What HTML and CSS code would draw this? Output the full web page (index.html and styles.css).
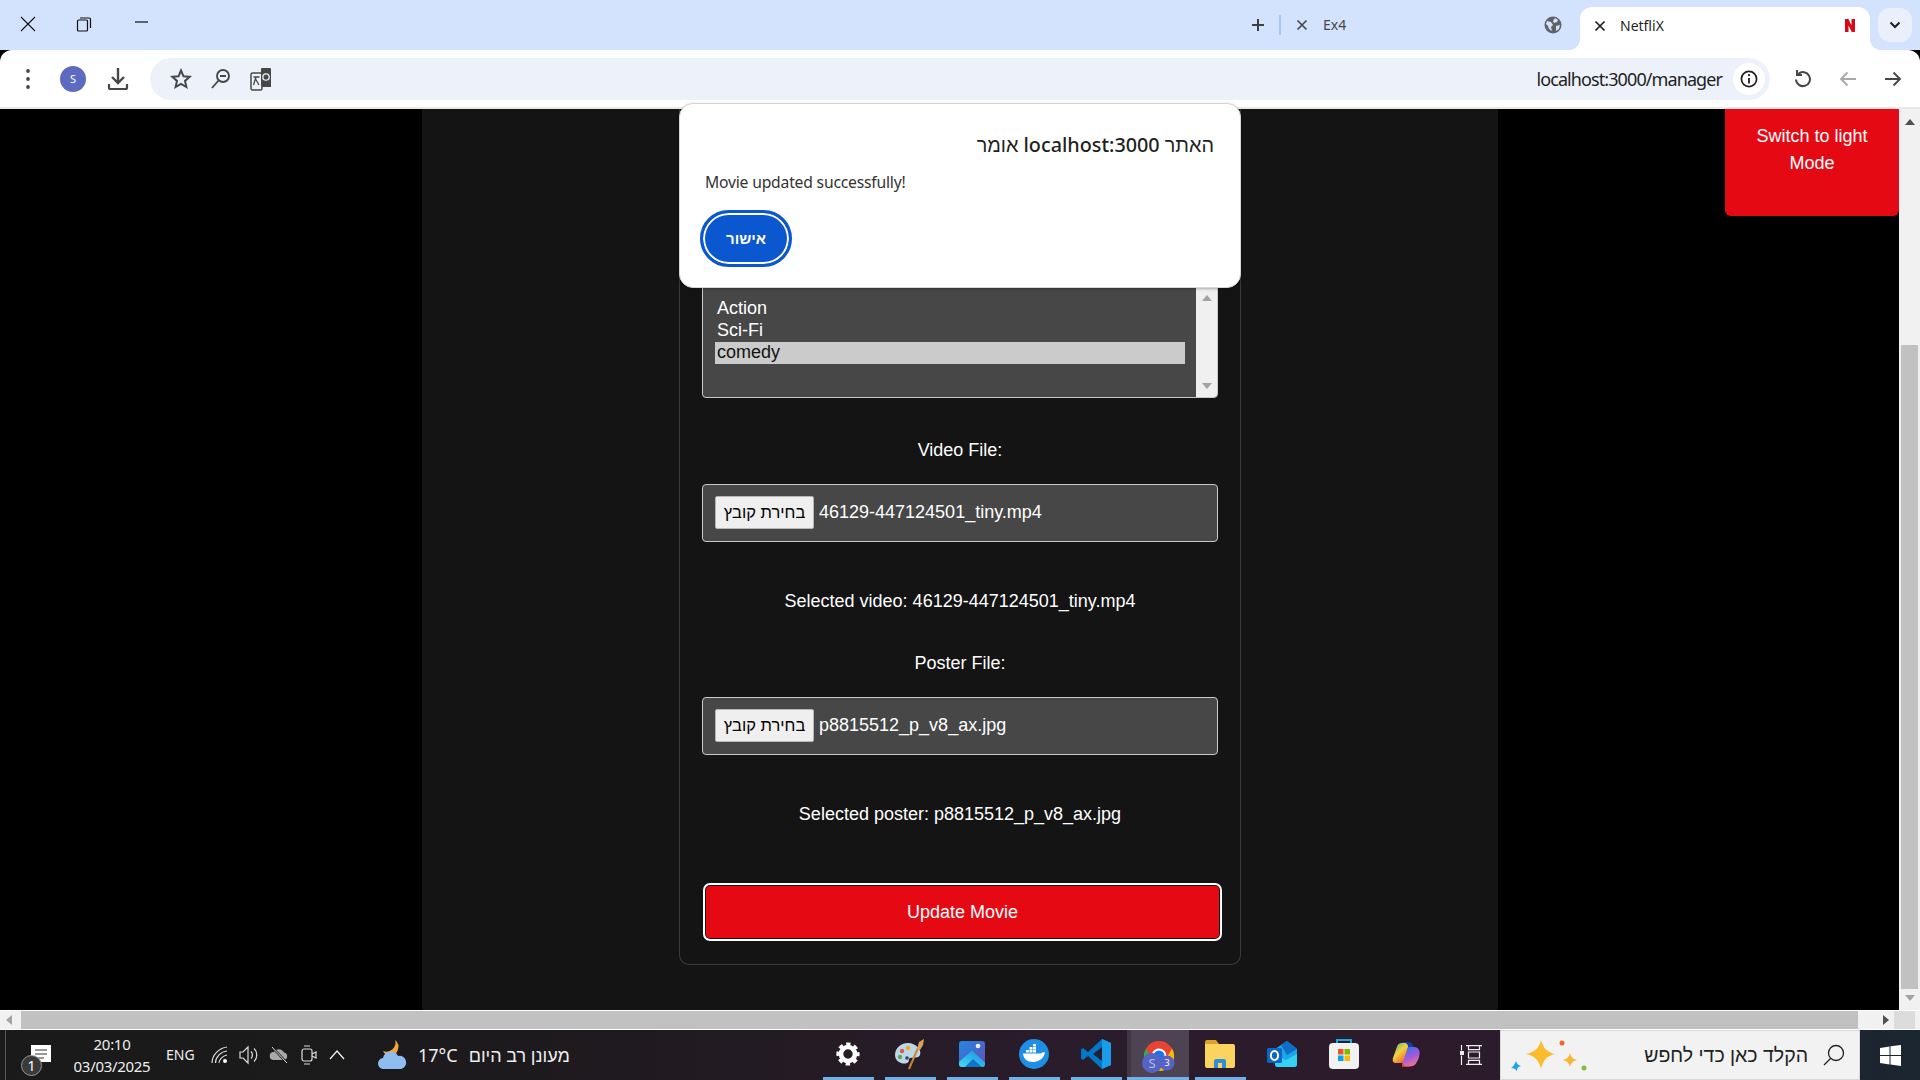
FILE: index.html
```html
<!DOCTYPE html>
<html lang="he">
<head>
<meta charset="utf-8">
<title>NetfliX</title>
<link rel="stylesheet" href="styles.css">
</head>
<body>
<div class="screen">
  <header class="tabstrip">
    <div class="winbtn"><svg width="18" height="18" viewBox="0 0 18 18"><path d="M2 2l14 14M16 2L2 16" stroke="#111" stroke-width="1.1" fill="none"/></svg></div>
    <div class="winbtn"><svg width="16" height="16" viewBox="0 0 16 16"><rect x="1.5" y="4" width="10" height="11" rx="1" fill="none" stroke="#111" stroke-width="1.2"/><path d="M4 2h9.5a1 1 0 0 1 1 1v9" fill="none" stroke="#111" stroke-width="1.2"/></svg></div>
    <div class="winbtn winbtn-min"><svg width="16" height="4" viewBox="0 0 16 4"><path d="M1 1h13" stroke="#111" stroke-width="1.2"/></svg></div>
    <div class="strip-space"></div>
    <div class="newtab"><svg width="14" height="14" viewBox="0 0 14 14"><path d="M7 1v12M1 7h12" stroke="#3c4043" stroke-width="2"/></svg></div>
    <div class="tabdiv"></div>
    <div class="tab">
      <svg class="tabx" width="12" height="12" viewBox="0 0 12 12"><path d="M1.5 1.5l9 9M10.5 1.5l-9 9" stroke="#45494e" stroke-width="1.7"/></svg>
      <span class="tabtitle tabtitle-dim">Ex4</span>
      <svg class="tabfav" width="18" height="18" viewBox="0 0 18 18"><circle cx="9" cy="9" r="8.5" fill="#5f6368"/><path d="M3 5l4 1 2 3-2 2 1 4-3-2-1-3-2-2zM11 2l3 2-1 2-3 1-1-2zM12 10l4-1-1 4-3 2z" fill="#d3e3fd"/></svg>
    </div>
    <div class="tab tab-active">
      <svg class="tabx" width="12" height="12" viewBox="0 0 12 12"><path d="M1.5 1.5l9 9M10.5 1.5l-9 9" stroke="#1f1f1f" stroke-width="1.7"/></svg>
      <span class="tabtitle">NetfliX</span>
      <svg class="tabfav-n" width="10" height="13" viewBox="0 0 10 13"><path d="M0 0h3.500l3 6.500V0H10v13H6.800L3.500 6.500V13H0z" fill="#d5091a"/></svg>
    </div>
    <div class="tabmenu"><svg width="12" height="8" viewBox="0 0 12 8"><path d="M1.5 1.5L6 6l4.5-4.5" stroke="#1f1f1f" stroke-width="2" fill="none"/></svg></div>
  </header>

  <nav class="toolbar">
    <div class="tool tool-dots"><svg width="6" height="22" viewBox="0 0 6 22"><circle cx="3" cy="3" r="1.9" fill="#474747"/><circle cx="3" cy="11" r="1.9" fill="#474747"/><circle cx="3" cy="19" r="1.9" fill="#474747"/></svg></div>
    <div class="tool tool-avatar"><span class="avatar">S</span></div>
    <div class="tool tool-dl"><svg width="22" height="24" viewBox="0 0 22 24"><path d="M11 1v14M5 10l6 6 6-6" stroke="#474747" stroke-width="2.4" fill="none"/><path d="M2 17v3.5a1.5 1.5 0 0 0 1.5 1.5h15a1.5 1.5 0 0 0 1.5-1.5V17" stroke="#474747" stroke-width="2.2" fill="none"/></svg></div>
    <div class="omnibox">
      <div class="omni-icon"><svg width="22" height="22" viewBox="0 0 22 22"><path d="M11 2.5l2.5 5.8 6.2.5-4.7 4.1 1.4 6.1L11 15.9l-5.4 3.1L7 12.9 2.3 8.8l6.2-.5z" fill="none" stroke="#474747" stroke-width="2"/></svg></div>
      <div class="omni-icon"><svg width="20" height="22" viewBox="0 0 20 22"><circle cx="12" cy="8" r="6" fill="none" stroke="#474747" stroke-width="1.9"/><path d="M7.5 12.5L1 20" stroke="#474747" stroke-width="1.9"/><path d="M9 8h6" stroke="#474747" stroke-width="2"/></svg></div>
      <div class="omni-icon"><svg width="22" height="24" viewBox="0 0 22 24"><rect x="1" y="6" width="11" height="17" rx="1.5" fill="none" stroke="#474747" stroke-width="1.5"/><path d="M3.5 10h6M6 10l-2.5 8M5 11l4 7" stroke="#474747" stroke-width="1.3" fill="none"/><path d="M11 2a1 1 0 0 1 1-1h8a1 1 0 0 1 1 1v18h-9l-1-2z" fill="#474747"/><circle cx="16" cy="10" r="3.2" fill="none" stroke="#eef2fa" stroke-width="1.3"/></svg></div>
      <div class="omni-space"></div>
      <span class="url">localhost:3000/manager</span>
      <div class="info"><svg width="18" height="18" viewBox="0 0 18 18"><circle cx="9" cy="9" r="7.6" fill="none" stroke="#1f1f1f" stroke-width="1.7"/><path d="M9 8v5.5" stroke="#1f1f1f" stroke-width="1.8"/><circle cx="9" cy="5.2" r="1.1" fill="#1f1f1f"/></svg></div>
    </div>
    <div class="tool tool-nav tool-reload"><svg width="18" height="20" viewBox="0 0 18 20"><path d="M4.3 4.9A7 7 0 1 1 2 10.5" fill="none" stroke="#474747" stroke-width="2"/><path d="M3 1v5h5" fill="none" stroke="#474747" stroke-width="2"/></svg></div>
    <div class="tool tool-nav"><svg width="18" height="16" viewBox="0 0 18 16"><path d="M17 8H2M8.500 1.500L2 8l6.500 6.500" fill="none" stroke="#a8a8a8" stroke-width="1.900"/></svg></div>
    <div class="tool tool-nav"><svg width="18" height="16" viewBox="0 0 18 16"><path d="M1 8h15M9.500 1.500L16 8l-6.500 6.500" fill="none" stroke="#474747" stroke-width="1.900"/></svg></div>
  </nav>

  <div class="viewport">
    <main class="page">
      <div class="column">
        <form class="card">
          <div class="listbox">
            <div class="listbox-opts">
              <div class="opt">Action</div>
              <div class="opt">Sci-Fi</div>
              <div class="opt opt-on">comedy</div>
            </div>
            <div class="listbox-bar">
              <span class="arrow-up arrow-dim"></span>
              <span class="arrow-down arrow-dim"></span>
            </div>
          </div>

          <div class="label label-video">Video File:</div>
          <div class="filebox filebox-video">
            <span class="filebtn">בחירת קובץ</span>
            <span class="filename">46129-447124501_tiny.mp4</span>
          </div>
          <div class="label label-selvideo">Selected video: 46129-447124501_tiny.mp4</div>

          <div class="label label-poster">Poster File:</div>
          <div class="filebox filebox-poster">
            <span class="filebtn">בחירת קובץ</span>
            <span class="filename">p8815512_p_v8_ax.jpg</span>
          </div>
          <div class="label label-selposter">Selected poster: p8815512_p_v8_ax.jpg</div>

          <div class="update">Update Movie</div>
        </form>
      </div>
      <div class="modeswitch">Switch to light Mode</div>
    </main>
    <div class="vbar">
      <span class="arrow-up arrow-dark"></span>
      <div class="vthumb"></div>
      <span class="arrow-down"></span>
    </div>
  </div>

  <div class="hbar">
    <span class="arrow-left"></span>
    <div class="hthumb"></div>
    <span class="arrow-right"></span>
    <div class="corner"></div>
  </div>

  <footer class="taskbar">
    <div class="notif">
      <svg width="20" height="20" viewBox="0 0 20 20"><path d="M0 0h20v17H8l-4 3v-3H0z" fill="#fff"/><path d="M4 5h12M4 9h12M4 13h9" stroke="#333" stroke-width="1.2"/></svg>
      <span class="notif-badge">1</span>
    </div>
    <div class="clock"><span>20:10</span><span>03/03/2025</span></div>
    <span class="lang">ENG</span>
    <div class="tray">
      <svg width="18" height="18" viewBox="0 0 18 18"><path d="M1 17C1 9 8 2 16 1M4.500 17C4.500 11 10 5.500 16 5M8 17c0-3.500 3.500-7 8-8" fill="none" stroke="#ddd" stroke-width="1.200"/><circle cx="14" cy="15" r="2" fill="#fff"/></svg>
      <svg width="20" height="20" viewBox="0 0 20 20"><path d="M1 7h3l5-5v16l-5-5H1z" fill="none" stroke="#ddd" stroke-width="1.200"/><path d="M12 6.500a5 5 0 0 1 0 7M15 3.500a9 9 0 0 1 0 13" fill="none" stroke="#ddd" stroke-width="1.200"/></svg>
      <svg width="20" height="18" viewBox="0 0 20 18"><path d="M5 14a4 4 0 0 1-.5-8A6 6 0 0 1 15 6.500 3.800 3.800 0 0 1 15 14z" fill="#aaa"/><path d="M3 1l15 16" stroke="#1c1c1c" stroke-width="2.500"/><path d="M3 1l15 16" stroke="#ddd" stroke-width="1"/></svg>
      <svg class="tray-meet" width="16" height="22" viewBox="0 0 16 22"><rect x="1" y="5" width="10" height="12" rx="2" fill="none" stroke="#ddd" stroke-width="1.200"/><path d="M11 10l4-2v6l-4-2M3 2h6M3 20h6" fill="none" stroke="#ddd" stroke-width="1.200"/></svg>
      <svg class="tray-more" width="16" height="10" viewBox="0 0 16 10"><path d="M1 9l7-8 7 8" fill="none" stroke="#eee" stroke-width="1.300"/></svg>
    </div>
    <div class="weather">
      <svg width="32" height="32" viewBox="0 0 32 32"><path d="M19 1a9 9 0 0 1-12 11 9 9 0 0 0 6 5 9 9 0 0 0 6-16z" fill="#f2a735"/><path d="M8 30a5.500 5.500 0 0 1-1-11 8 8 0 0 1 15-2 6.500 6.500 0 0 1 3 13z" fill="#8fbdf0"/></svg>
      <span class="temp">17°C</span>
      <span class="forecast" dir="rtl">מעונן רב היום</span>
    </div>

    <div class="apps">
      <div class="app app-on"><svg width="26" height="26" viewBox="0 0 26 26"><circle cx="13" cy="13" r="7" fill="none" stroke="#fff" stroke-width="4.600"/><circle cx="13" cy="13" r="10" fill="none" stroke="#fff" stroke-width="3.200" stroke-dasharray="4.300 3.550" stroke-dashoffset="2.100"/></svg></div>
      <div class="app app-on"><svg width="30" height="32" viewBox="0 0 30 32"><path d="M13 5C5 5 0 11 0 17c0 7 8 10 12 8 3-1 1-4 3-5 3-1 8 1 10-3 2-5-4-12-12-12z" fill="#bcd7e6"/><circle cx="7" cy="13" r="2.200" fill="#e2574c"/><circle cx="13" cy="10" r="2.200" fill="#f2a735"/><circle cx="5" cy="19" r="2.200" fill="#5aa854"/><circle cx="12" cy="20" r="1.800" fill="#39424f"/><path d="M14 31l9-21" stroke="#c98434" stroke-width="2"/><path d="M22 11l2-7 5-3-1 6-3 5z" fill="#d9a35a"/></svg></div>
      <div class="app app-on"><svg width="26" height="26" viewBox="0 0 26 26"><defs><linearGradient id="ph" x1="0" y1="0" x2="1" y2="1"><stop offset="0" stop-color="#1e88e5"/><stop offset="1" stop-color="#6a4db5"/></linearGradient><linearGradient id="ph2" x1="0" y1="1" x2="1" y2="0"><stop offset="0" stop-color="#3fe0f0"/><stop offset="1" stop-color="#1d8be0"/></linearGradient></defs><rect width="26" height="26" rx="3" fill="url(#ph)"/><path d="M0 21L13 9.500 26 21.500V23a3 3 0 0 1-3 3H3a3 3 0 0 1-3-3z" fill="url(#ph2)"/><path d="M6 26l8-8 9 8z" fill="#1173c9"/><circle cx="19" cy="5" r="2.300" fill="#eee"/></svg></div>
      <div class="app app-on"><svg width="30" height="30" viewBox="0 0 30 30"><circle cx="15" cy="15" r="15" fill="#1d8fe6"/><path d="M4 14.500h18c1.200-1 2.500-1.500 4-1-.7 4-4.500 9.500-12 9.500-6 0-9.500-3.500-10-8.500z" fill="#fff"/><path d="M7 13.500h3V11H7zM10.500 13.500h3V11h-3zM14 13.500h3V11h-3zM10.500 10.500h3V8h-3zM14 10.500h3V8h-3zM14 7.500h3V5h-3z" fill="#fff"/></svg></div>
      <div class="app app-on"><svg width="30" height="30" viewBox="0 0 30 30"><path d="M21 0l9 4v22l-9 4L7 17l-5 4-2-1.500V10.500L2 9l5 4z" fill="#0078c8"/><path d="M21 0l9 4v22l-9 4z" fill="#1b9ce8"/><path d="M21 8v14l-9-7z" fill="#262033"/></svg></div>
      <div class="app app-on app-active"><svg width="38" height="40" viewBox="0 0 38 40"><circle cx="18" cy="22" r="15" fill="#ea4335"/><path d="M31 14.500A15 15 0 0 1 18 37l6.500-11z" fill="#fbbc04"/><path d="M5 14.500A15 15 0 0 0 18 37l6.500-11H12z" fill="#34a853"/><circle cx="18" cy="22" r="7.500" fill="#fff"/><circle cx="18" cy="22" r="5.500" fill="#1a73e8"/><circle cx="26" cy="29" r="7.500" fill="#5463c4"/><text class="badge-txt" x="26" y="32" text-anchor="middle">3</text><circle cx="11" cy="29" r="10" fill="#5463c4"/><text class="badge-txt badge-s" x="11" y="34" text-anchor="middle">S</text></svg></div>
      <div class="app app-on"><svg width="30" height="28" viewBox="0 0 30 28"><path d="M0 2a2 2 0 0 1 2-2h9l3 4H0z" fill="#d9a32c"/><path d="M0 4h28a2 2 0 0 1 2 2v20a2 2 0 0 1-2 2H2a2 2 0 0 1-2-2z" fill="#fbd35f"/><path d="M9 28v-7a2 2 0 0 1 2-2h8a2 2 0 0 1 2 2v7h-4v-5h-4v5z" fill="#2d8fdb"/></svg></div>
      <div class="app"><svg width="30" height="26" viewBox="0 0 30 26"><path d="M8 8l12-8 10 8v15a3 3 0 0 1-3 3H11a3 3 0 0 1-3-3z" fill="#1aa7e8"/><path d="M8 14l11 5 11-6v10a3 3 0 0 1-3 3H11a3 3 0 0 1-3-3z" fill="#35d0f5"/><path d="M14 4l6-4 10 8-10 6z" fill="#0f6fc6"/><rect x="0" y="7" width="15" height="15" rx="1.500" fill="#0a66c2"/><ellipse cx="7.500" cy="14.500" rx="3.600" ry="4.400" fill="none" stroke="#fff" stroke-width="2"/></svg></div>
      <div class="app"><svg width="30" height="30" viewBox="0 0 30 30"><path d="M8 5V1h14v4" fill="none" stroke="#1ea5e9" stroke-width="2"/><rect x="0" y="4" width="30" height="26" rx="4" fill="#f2f2f2"/><rect x="9" y="10" width="5.500" height="5.500" fill="#f25022"/><rect x="15.500" y="10" width="5.500" height="5.500" fill="#7fba00"/><rect x="9" y="16.500" width="5.500" height="5.500" fill="#00a4ef"/><rect x="15.500" y="16.500" width="5.500" height="5.500" fill="#ffb900"/></svg></div>
      <div class="app"><svg width="28" height="26" viewBox="0 0 28 26"><defs><linearGradient id="co1" x1="0" y1="0" x2=".7" y2="1"><stop offset="0" stop-color="#2db8a5"/><stop offset=".5" stop-color="#f2d33a"/><stop offset="1" stop-color="#f0603a"/></linearGradient><linearGradient id="co2" x1=".3" y1="0" x2=".7" y2="1"><stop offset="0" stop-color="#3f6fe8"/><stop offset=".5" stop-color="#a05ae0"/><stop offset="1" stop-color="#f07a8a"/></linearGradient></defs><path d="M10 1h6c3 0 4 1 5 4l1 5H12z" fill="#123f9a"/><path d="M10 20h6c3 0 4-1 5-4v8c0 1-2 2-4 2h-7z" fill="#d23f3a"/><path d="M10 2C7 2 5.500 3.500 4.500 7L1 17c-1 3 .5 5 3 5h4c3 0 4-1.500 5-5l3-10c.5-3-1-5-4-5z" fill="url(#co1)"/><path d="M17 6h5c3 0 5 1.500 5.500 4.500.5 4-1 8-3 11-1 2-2.500 3.500-5 3.500h-6c-2 0-3-2-2.500-4L15 9c.3-2 1-3 2-3z" fill="url(#co2)"/></svg></div>
    </div>

    <div class="taskview"><svg width="22" height="20" viewBox="0 0 22 20"><path d="M1.500 0v5.500M1.500 10.500V20" stroke="#eee" stroke-width="1.200"/><rect x="0" y="6" width="4" height="4" fill="#eee"/><path d="M6 .6h16M8.500.6v4h11v-4M8.500 7h11v6h-11zM6 19.400h16M8.500 19.400v-4h11v4" fill="none" stroke="#eee" stroke-width="1.200"/></svg></div>
    <div class="search">
      <svg class="sparkles" width="76" height="34" viewBox="0 0 76 34"><path d="M30 0c2 8 6 12 14 14-8 2-12 6-14 15-2-9-6-13-15-15 9-2 13-6 15-14z" fill="#fbbc2c"/><path d="M59 13c1 4 3 6 7 7-4 1-6 3-7 7-1-4-3-6-7-7 4-1 6-3 7-7z" fill="#f7b731"/><circle cx="51" cy="3" r="2.500" fill="#f4622a"/><circle cx="73" cy="28" r="2.500" fill="#7ac143"/><path d="M5 21c1 3 2 4 5 5-3 1-4 2-4 5-2-2-3-3-6-3 2-1 3-3 5-7z" fill="#1ea5f0"/></svg>
      <span class="search-text" dir="rtl">הקלד כאן כדי לחפש</span>
      <svg class="search-icon" width="22" height="22" viewBox="0 0 22 22"><circle cx="13" cy="9" r="7.500" fill="none" stroke="#222" stroke-width="1.300"/><path d="M7.500 14.500L1 21" stroke="#222" stroke-width="1.300"/></svg>
    </div>
    <div class="start"><svg width="21" height="21" viewBox="0 0 21 21"><path d="M0 3l9.500-1.500V10H0zM10.500 1.300L21 0v10h-10.500zM0 11h9.500v8.500L0 18zM10.500 11H21v10l-10.500-1.400z" fill="#fff"/></svg></div>
  </footer>

  <div class="alert">
    <div class="alert-title" dir="rtl">האתר localhost:3000 אומר</div>
    <div class="alert-msg">Movie updated successfully!</div>
    <div class="alert-ok">אישור</div>
  </div>
</div>
</body>
</html>
```

FILE: styles.css
```css
* { box-sizing: border-box; }
html, body { margin: 0; padding: 0; background: #000; overflow: hidden; }
.screen {
  position: relative;
  width: 1920px;
  height: 1080px;
  display: flex;
  flex-direction: column;
  overflow: hidden;
  font-family: "Liberation Sans", Arial, sans-serif;
}

/* Tab strip */
.tabstrip {
  height: 50px;
  flex: none;
  display: flex;
  align-items: flex-start;
  background: #d3e3fd;
  padding-right: 8px;
}
.winbtn { width: 56px; height: 50px; display: flex; align-items: center; justify-content: center; padding-bottom: 2px; }
.winbtn-min { width: 60px; padding-bottom: 4px; }
.strip-space { flex: 1; }
.newtab { width: 38px; height: 50px; display: flex; align-items: center; justify-content: center; }
.tabdiv { width: 2px; height: 20px; margin: 15px 0 0 2px; background: #a8c7fa; }
.tab { position: relative; display: flex; align-items: center; height: 50px; width: 299px; padding-left: 15px; }
.tabx { flex: none; }
.tabtitle { margin-left: 15px; font: 14px/20px "Noto Sans", sans-serif; color: #1f1f1f; }
.tabtitle-dim { color: #474747; }
.tabfav { position: absolute; left: 263px; top: 16px; }
.tab-active {
  width: 290px;
  height: 43px;
  margin-top: 7px;
  padding-left: 14px;
  padding-bottom: 5px;
  background: #fff;
  border-radius: 12px 12px 0 0;
}
.tab-active .tabtitle { margin-left: 14px; }
.tab-active::before, .tab-active::after {
  content: "";
  position: absolute;
  bottom: 0;
  width: 12px;
  height: 12px;
}
.tab-active::before { left: -12px; background: radial-gradient(circle at 0 0, transparent 12px, #fff 12.5px); }
.tab-active::after { right: -12px; background: radial-gradient(circle at 100% 0, transparent 12px, #fff 12.5px); }
.tabfav-n { position: absolute; left: 265px; top: 12px; }
.tabmenu {
  width: 34px;
  height: 34px;
  margin: 8px 0 0 8px;
  display: flex;
  align-items: center;
  justify-content: center;
  background: #e9f0fc;
  border-radius: 12px;
}

/* Toolbar */
.toolbar {
  position: relative;
  height: 59px;
  flex: none;
  display: flex;
  align-items: flex-start;
  background: #fff;
  border-radius: 12px 12px 0 0;
  border-bottom: 2px solid #e9e9e9;
  padding-top: 8px;
}
.tool { height: 42px; display: flex; align-items: center; justify-content: center; }
.tool-dots { width: 55px; }
.tool-avatar { width: 36px; }
.tool-dl { width: 54px; }
.avatar {
  width: 26px;
  height: 26px;
  border-radius: 50%;
  background: #5c6bc0;
  color: #fff;
  font: 11px/26px "Noto Sans", sans-serif;
  text-align: center;
}
.omnibox {
  width: 1620px;
  height: 42px;
  margin-left: 5px;
  display: flex;
  align-items: center;
  padding: 0 5px 0 11px;
  border-radius: 21px;
  background: #edf2fa;
}
.omni-icon { width: 40px; display: flex; justify-content: center; }
.omni-space { flex: 1; }
.url { font: 18px/24px "Noto Sans", sans-serif; letter-spacing: -.91px; color: #1f1f1f; }
.info {
  width: 32px;
  height: 32px;
  margin-left: 11px;
  border-radius: 50%;
  background: #fff;
  display: flex;
  align-items: center;
  justify-content: center;
}
.tool-nav { width: 45px; }
.tool-reload { margin-left: 10px; }

/* Viewport */
.viewport { height: 901px; flex: none; display: flex; }
.page { position: relative; width: 1899px; background: #000; padding-left: 422px; }
.column { width: 1076px; height: 901px; background: #141414; padding-left: 257px; }
.card {
  width: 562px;
  height: 856px;
  display: flex;
  flex-direction: column;
  padding: 171px 22px 0 22px;
  border: 1px solid #3a3a3a;
  border-top: 0;
  border-radius: 0 0 10px 10px;
  color: #fff;
  font-size: 18px;
}
.listbox {
  width: 516px;
  height: 118px;
  flex: none;
  display: flex;
  background: #474747;
  border: 1px solid #c9c9c9;
  border-radius: 4px;
  overflow: hidden;
}
.listbox-opts { flex: 1; padding: 17px 11px 0 12px; }
.opt { height: 22px; padding-left: 2px; line-height: 20px; }
.opt-on { background: #cbcbcb; color: #111; }
.listbox-bar {
  position: relative;
  width: 21px;
  background: #f0f0f0;
  display: flex;
  flex-direction: column;
  justify-content: space-between;
  align-items: center;
  padding: 14px 0 8px;
}
.label { height: 20px; flex: none; text-align: center; line-height: 20px; }
.label-video { margin-top: 42px; }
.label-selvideo { margin-top: 49px; }
.label-poster { margin-top: 42px; }
.label-selposter { margin-top: 49px; }
.filebox {
  width: 516px;
  height: 58px;
  flex: none;
  display: flex;
  align-items: center;
  padding-left: 12px;
  background: #474747;
  border: 1px solid #c9c9c9;
  border-radius: 4px;
}
.filebox-video { margin-top: 24px; }
.filebox-poster { margin-top: 24px; }
.filebtn {
  width: 99px;
  height: 33px;
  flex: none;
  margin-top: -1px;
  background: #efefef;
  border: 1px solid #b5b5b5;
  border-radius: 2px;
  color: #000;
  font-size: 16.500px;
  text-align: center;
  line-height: 31px;
  direction: rtl;
}
.filename { margin-left: 5px; margin-top: -2px; }
.update {
  width: 519px;
  height: 58px;
  flex: none;
  margin: 59px 0 0 1px;
  background: #e50914;
  border: 2px solid #fff;
  border-radius: 7px;
  box-shadow: inset 0 0 0 1px #141414;
  text-align: center;
  line-height: 54px;
}
.modeswitch {
  position: absolute;
  right: 0;
  top: 0;
  width: 174px;
  height: 107px;
  padding: 14px 20px;
  background: #e50914;
  border-radius: 0 0 6px 6px;
  color: #fff;
  font-size: 18px;
  line-height: 27px;
  text-align: center;
}

/* Scrollbars */
.vbar {
  position: relative;
  width: 21px;
  background: #f1f1f1;
  display: flex;
  flex-direction: column;
  align-items: center;
  padding-top: 10px;
}
.vthumb { width: 17px; height: 644px; margin-top: 220px; background: #c1c1c1; }
.vbar .arrow-down { margin-top: 6px; }
.arrow-up, .arrow-down, .arrow-left, .arrow-right { display: block; width: 0; height: 0; flex: none; }
.arrow-up { border: 5px solid transparent; border-top: 0; border-bottom: 6px solid #505050; }
.arrow-down { border: 5px solid transparent; border-bottom: 0; border-top: 6px solid #a3a3a3; }
.arrow-dim { border-bottom-color: #a3a3a3; }
.arrow-left { border: 5px solid transparent; border-left: 0; border-right: 6px solid #a3a3a3; margin-left: 6px; }
.arrow-right { border: 5px solid transparent; border-right: 0; border-left: 6px solid #505050; margin-left: 25px; }
.hbar {
  height: 20px;
  flex: none;
  display: flex;
  align-items: center;
  background: #f1f1f1;
  border-bottom: 1px solid #fff;
  border-top: 1px solid #fff;
}
.hthumb { width: 1837px; height: 18px; margin-left: 9px; background: #c1c1c1; }
.corner { width: 21px; height: 18px; margin-left: 5px; background: #dcdcdc; }

/* Taskbar */
.taskbar {
  position: relative;
  height: 50px;
  flex: none;
  display: flex;
  align-items: center;
  background: linear-gradient(90deg, #1a1a1a 0%, #1c1a1c 25%, #2a1c2b 55%, #2d1b2b 75%, #1b2630 100%);
  color: #eee;
}
.notif { position: relative; width: 55px; height: 50px; margin-left: 5px; border-left: 1px solid #555; flex: none; }
.notif-badge {
  position: absolute;
  left: 15px;
  top: 25px;
  width: 21px;
  height: 21px;
  border: 1px solid #999;
  border-radius: 50%;
  background: #3a3a3a;
  color: #fff;
  font: 14px/19px "Noto Sans", sans-serif;
  text-align: center;
}
.notif svg { position: absolute; left: 25px; top: 15px; }
.clock {
  width: 100px;
  margin-left: 2px;
  display: flex;
  flex-direction: column;
  align-items: center;
  gap: 3px;
  font: 15px/19px "Noto Sans", sans-serif;
  letter-spacing: -.3px;
}
.lang { width: 32px; margin-left: 4px; font: 14px/20px "Noto Sans", sans-serif; }
.tray { width: 150px; margin-left: 13px; display: flex; align-items: center; gap: 10px; }
.tray-meet, .tray-more { margin-left: 2px; }
.weather { display: flex; align-items: center; width: 205px; margin-left: 15px; flex: none; }
.temp { margin-left: 10px; font: 18px/24px "Noto Sans", sans-serif; }
.forecast { margin-left: 11px; font: 18px/24px "Noto Sans", "Liberation Sans", sans-serif; white-space: nowrap; }
.apps { display: flex; margin-left: 236px; }
.app { position: relative; width: 62px; height: 50px; display: flex; align-items: center; justify-content: center; flex: none; padding-bottom: 3px; }
.app-on::after {
  content: "";
  position: absolute;
  left: 6px;
  right: 5px;
  bottom: 0;
  height: 3px;
  background: #6db2e9;
}
.app-active { background: #4e4352; border-left: 4px solid #3f3743; }
.app-active::after { left: -4px; right: 0; }
.badge-txt { font: 9px "Noto Sans", sans-serif; fill: #fff; }
.badge-s { font-size: 13px; fill: #b6bdea; }
.taskview { width: 64px; display: flex; justify-content: center; margin-left: 2px; }
.search {
  width: 360px;
  height: 50px;
  margin-left: -3px;
  flex: none;
  position: relative;
  display: flex;
  align-items: center;
  justify-content: flex-end;
  padding-right: 14px;
  background: #f2f2f2;
  border: 1px solid #d8d8d8;
}
.sparkles { position: absolute; left: 10px; top: 9px; }
.search-text { font: 19.500px/26px "Liberation Sans", sans-serif; color: #222; margin-right: 15px; white-space: nowrap; }
.start { flex: 1; display: flex; justify-content: center; padding-left: 1px; }

/* Alert */
.alert {
  position: absolute;
  left: 679px;
  top: 103px;
  width: 562px;
  height: 185px;
  padding: 27px 26px 0 20px;
  background: #fff;
  border: 1px solid #d6d6d6;
  border-radius: 14px;
  box-shadow: 0 1px 3px rgba(0,0,0,.3);
  color: #1f1f1f;
}
.alert-title { height: 28px; font: 500 19.800px/28px "Noto Sans", "Liberation Sans", sans-serif; color: #1f1f1f; }
.alert-msg { margin-top: 12px; height: 22px; padding-left: 5px; font: 15.700px/22px "Noto Sans", sans-serif; letter-spacing: -.2px; color: #333; }
.alert-ok {
  width: 92px;
  height: 57px;
  margin-top: 17px;
  border: 3px solid #0b57d0;
  border-radius: 29px;
  background: #0b57d0;
  box-shadow: inset 0 0 0 2px #fff;
  color: #fff;
  font: bold 15px/51px "Liberation Sans", sans-serif;
  text-align: center;
  direction: rtl;
}
```
